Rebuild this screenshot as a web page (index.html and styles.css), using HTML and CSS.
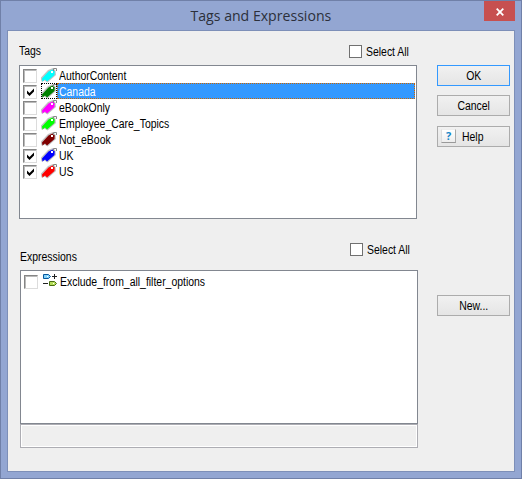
FILE: index.html
```
<!DOCTYPE html>
<html lang="en">
<head>
<meta charset="utf-8">
<title>Tags and Expressions</title>
<link rel="stylesheet" href="styles.css">
</head>
<body>
<svg class="defs" width="0" height="0">
  <symbol id="tag" viewBox="1 0 16 16">
    <path class="tag-shadow" d="M1 13V10.500L8 3l5-2 2.500 2.500.5 4.500L7.500 15.500 4.500 13.500 2 15z"/>
    <path d="M2 11.500 8.500 4.500 12.500 2.500 14.700 4.300 14.500 8 7 14.500 5 12.500 2.500 14.500z" fill="currentColor"/>
    <path class="tag-string" d="M13.500 4V1.500h3V4"/>
    <rect class="tag-hole" x="11" y="4" width="2" height="2"/>
  </symbol>
  <symbol id="check" viewBox="0 0 9 8"><path d="M1 2.500 3.500 5 8 .5V3.500L3.500 8 1 5.500z"/></symbol>
</svg>
<div class="window">
  <header class="titlebar">
    <h1>Tags and Expressions</h1>
    <button class="close" aria-label="Close"><svg width="8" height="8" viewBox="0 0 8 8"><path d="M.7.7 7.300 7.300M7.300.7.7 7.300"/></svg></button>
  </header>
  <main class="client">
    <div class="lists">
      <section>
        <div class="heading"><h2>Tags</h2><label class="all"><i class="box"></i><span class="t">Select All</span></label></div>
        <ul class="list">
          <li><i class="check"></i><svg class="tag cyan"><use href="#tag"/></svg><div class="name"><span class="t">AuthorContent</span></div></li>
          <li class="selected"><i class="check"><svg><use href="#check"/></svg></i><svg class="tag green"><use href="#tag"/></svg><div class="name"><span class="t">Canada</span></div></li>
          <li><i class="check"></i><svg class="tag magenta"><use href="#tag"/></svg><div class="name"><span class="t">eBookOnly</span></div></li>
          <li><i class="check"></i><svg class="tag lime"><use href="#tag"/></svg><div class="name"><span class="t">Employee_Care_Topics</span></div></li>
          <li><i class="check"></i><svg class="tag maroon"><use href="#tag"/></svg><div class="name"><span class="t">Not_eBook</span></div></li>
          <li><i class="check"><svg><use href="#check"/></svg></i><svg class="tag blue"><use href="#tag"/></svg><div class="name"><span class="t">UK</span></div></li>
          <li><i class="check"><svg><use href="#check"/></svg></i><svg class="tag red"><use href="#tag"/></svg><div class="name"><span class="t">US</span></div></li>
        </ul>
      </section>
      <section class="expressions">
        <div class="heading"><h2>Expressions</h2><label class="all"><i class="box"></i><span class="t">Select All</span></label></div>
        <ul class="list">
          <li><i class="check"></i><svg class="expr" width="15" height="13" viewBox="0 0 15 13">
            <path class="expr-a" d="M.5.500h5L7.500 2.500 5.500 4.500h-5z"/><path class="expr-b" d="M6.500 7.500h5l2 2-2 2h-5z"/>
            <path class="expr-line" d="M9 2.500h5M11.500 0v5M0 9.500h5"/><path class="expr-dot" d="M4 2.500h1M10 9.500h1"/>
          </svg><div class="name"><span class="t">Exclude_from_all_filter_options</span></div></li>
        </ul>
        <div class="status"></div>
      </section>
    </div>
    <aside class="actions">
      <button class="btn default"><span>OK</span></button>
      <button class="btn cancel"><span>Cancel</span></button>
      <button class="btn help"><i class="q">?</i><span>Help</span></button>
      <button class="btn new"><span>New...</span></button>
    </aside>
  </main>
</div>
</body>
</html>
```
FILE: styles.css
```
* { box-sizing: border-box; margin: 0; padding: 0; }
body { width: 522px; height: 479px; overflow: hidden; font: 12px/16px "Liberation Sans", Arial, sans-serif; color: #000; }
.defs { position: absolute; }
.window { width: 522px; height: 479px; background: #93a6d2; border: 1px solid #7080a8; padding: 0 6px 6px; display: flex; flex-direction: column; }
.titlebar { height: 29px; flex: none; display: flex; justify-content: center; position: relative; }
h1 { font: 15px/29px "Open Sans", "Noto Sans", sans-serif; color: #2c303b; transform: scaleX(.94); }
.close { position: absolute; right: 0; top: 0; width: 31px; height: 20px; border: 0; background: #c75050; display: flex; align-items: center; justify-content: center; padding-top: 1px; }
.close path { stroke: #fff; stroke-width: 1.800; fill: none; }
.client { flex: 1; background: #efefef; border: 1px solid #7d8fb8; display: flex; padding: 12px 4px 0 11px; justify-content: space-between; }
.lists { width: 399px; }
.heading { height: 22px; display: flex; justify-content: space-between; }
/* Condensed dialog lettering */
.t, h2, .btn span { display: inline-block; transform: scaleX(.87); transform-origin: left; white-space: nowrap; }
h2 { font-size: 12px; font-weight: normal; line-height: 16px; }
.all { display: flex; gap: 4px; width: 69px; height: 16px; line-height: 18px; }
.box { width: 13px; height: 13px; flex: none; border: 1px solid #707070; background: #fff; margin-top: 2px; }
.list { width: 398px; height: 154px; background: #fff; border: 1px solid #828790; list-style: none; padding: 1px 1px; }
.list li { height: 16px; display: flex; padding-left: 2px; }
.check { width: 14px; height: 14px; flex: none; border: 1px solid; border-color: #858585 #dcdcdc #dcdcdc #858585; box-shadow: inset 1px 1px #bababa; background: #fff; margin-top: 2px; padding: 2px 0 0 2px; }
.check svg { display: block; width: 9px; height: 8px; }
.tag { width: 16px; height: 16px; flex: none; margin-left: 4px; }
.name { flex: 1; height: 16px; line-height: 18px; padding-left: 2px; }
.name .t { display: block; width: max-content; }
.tag-shadow { fill: #c3c3c3; }
.tag-string { fill: none; stroke: #888; stroke-width: 1; }
.tag-hole { fill: #fff; }
.cyan { color: #00ffff; } .green { color: #008000; } .magenta { color: #ff00ff; } .lime { color: #00ff00; }
.maroon { color: #800000; } .blue { color: #0000ff; } .red { color: #ff0000; }
.selected .tag { outline: 1px dotted #000; outline-offset: -1px; }
.selected .name { background: #3399ff; color: #fff; outline: 1px dotted #cc6600; outline-offset: -1px; }
.expressions { margin: 22px 0 0 1px; }
.expressions .heading { height: 29px; }
.expressions h2 { margin: 8px 0 0; }
.expressions .all { margin-right: -1px; }
.expressions .list { padding-top: 2px; }
.expr { margin: 1px 0 0 5px; flex: none; }
.expr-a { fill: #83d2fa; stroke: #06579c; } .expr-b { fill: #b5de59; stroke: #466c12; }
.expr-line { stroke: #222; fill: none; } .expr-dot { stroke: #fff; }
.status { width: 398px; height: 24px; border: 1px solid #adadb3; box-shadow: inset 0 0 0 1px #fff; }
.actions { width: 73px; padding-top: 22px; display: flex; flex-direction: column; }
.btn { width: 73px; height: 21px; border: 1px solid #acacac; background: linear-gradient(#f1f1f1, #e5e5e5); font: 12px/19px "Liberation Sans", Arial, sans-serif; display: flex; justify-content: center; color: #000; }
.btn span { transform-origin: center; padding-top: 1px; }
.btn.default { border: 1px solid #3399ff; }
.cancel { margin-top: 9px; }
.help { margin-top: 10px; justify-content: flex-start; }
.btn.help span { padding: 1px 0 0; margin-left: 6px; transform-origin: left; }
.q { width: 15px; height: 14px; margin: 2px 0 0 3px; background: linear-gradient(#fff, #ededed); border: 1px solid; border-color: #eee #aaa #999 #ddd; font: bold 11px/12px "Open Sans", sans-serif; color: #1687c8; text-align: center; }
.new { margin-top: 148px; }
```
